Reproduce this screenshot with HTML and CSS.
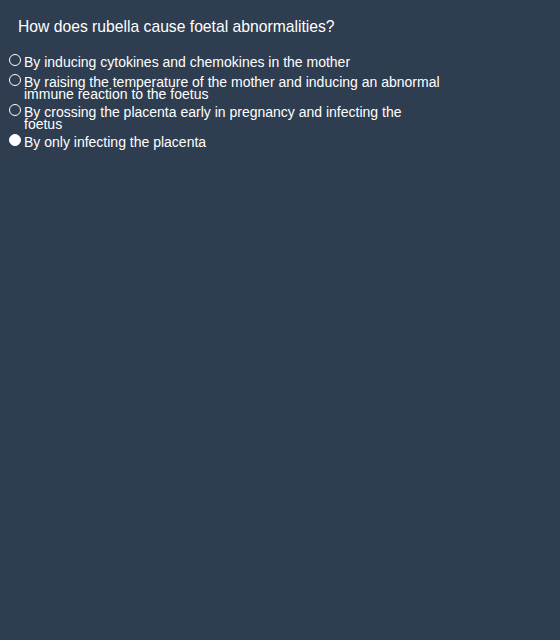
FILE: index.html
```html
<!DOCTYPE html>
<html>
<head>
<meta charset="utf-8">
<link rel="stylesheet" href="styles.css">
</head>
<body>
<div class="quiz">
  <div class="question">How does rubella cause foetal abnormalities?</div>
  <div class="options">
    <label class="option"><span class="radio"></span><span class="text">By inducing cytokines and chemokines in the mother</span></label>
    <label class="option"><span class="radio"></span><span class="text">By raising the temperature of the mother and inducing an abnormal immune reaction to the foetus</span></label>
    <label class="option"><span class="radio"></span><span class="text">By crossing the placenta early in pregnancy and infecting the foetus</span></label>
    <label class="option"><span class="radio checked"></span><span class="text">By only infecting the placenta</span></label>
  </div>
</div>
</body>
</html>
```
FILE: styles.css
```css
html, body {
  margin: 0;
  padding: 0;
  background: #2e3d4f;
  height: 100%;
}
body {
  font-family: "Liberation Sans", Arial, sans-serif;
  color: #ffffff;
}
.quiz {
  padding: 18px 0 0 8px;
  width: 434px;
}
.question {
  font-size: 15.7px;
  line-height: 18px;
  padding-left: 10px;
  margin-bottom: 18px;
}
.options {
  display: flex;
  flex-direction: column;
  gap: 4px;
}
.option {
  display: flex;
  align-items: flex-start;
  font-size: 14px;
  line-height: 12px;
  min-height: 16px;
}
.radio {
  flex: none;
  width: 10px;
  height: 10px;
  border: 1px solid #ffffff;
  border-radius: 50%;
  margin: 0 3px 0 1px;
  box-sizing: content-box;
}
.radio.checked {
  background: #ffffff;
}
.text {
  flex: 1;
  padding-top: 2px;
}
```
